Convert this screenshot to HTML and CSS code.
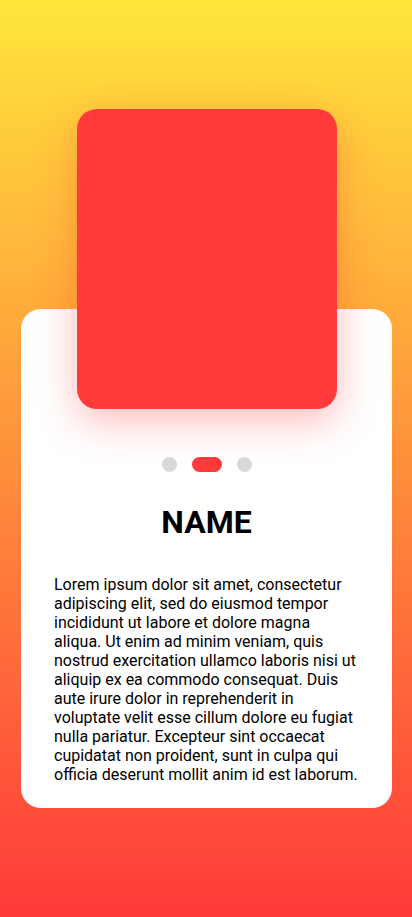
FILE: index.html
```html
<!DOCTYPE html>
<html>
<head>
<meta charset="utf-8">
<link rel="stylesheet" href="styles.css">
</head>
<body>
<div class="screen">
  <div class="photo"></div>
  <div class="card">
    <div class="dots">
      <span class="dot"></span>
      <span class="dot active"></span>
      <span class="dot"></span>
    </div>
    <h1 class="name">NAME</h1>
    <p class="bio">Lorem ipsum dolor sit amet, consectetur adipiscing elit, sed do eiusmod tempor incididunt ut labore et dolore magna aliqua. Ut enim ad minim veniam, quis nostrud exercitation ullamco laboris nisi ut aliquip ex ea commodo consequat. Duis aute irure dolor in reprehenderit in voluptate velit esse cillum dolore eu fugiat nulla pariatur. Excepteur sint occaecat cupidatat non proident, sunt in culpa qui officia deserunt mollit anim id est laborum.</p>
  </div>
</div>
</body>
</html>
```
FILE: styles.css
```css
html, body {
  margin: 0;
  padding: 0;
}
body {
  width: 412px;
  height: 917px;
  overflow: hidden;
  background: linear-gradient(to bottom, #FFE63C 0%, #FF3A3A 100%);
  font-family: Roboto, "Liberation Sans", sans-serif;
}
.screen {
  display: flex;
  flex-direction: column;
  align-items: flex-start;
  padding: 109px 20px 0 21px;
}
.photo {
  position: relative;
  z-index: 1;
  width: 260px;
  height: 300px;
  margin-left: 56px;
  border-radius: 20px;
  background: #FF3B3B;
  box-shadow: 0 12px 40px rgba(255, 60, 60, 0.35);
}
.card {
  box-sizing: border-box;
  width: 371px;
  height: 499px;
  margin-top: -100px;
  padding: 148px 33px 0;
  background: #fff;
  border-radius: 20px;
  display: flex;
  flex-direction: column;
  align-items: center;
}
.dots {
  display: flex;
  gap: 15px;
  height: 15px;
}
.dot {
  width: 15px;
  height: 15px;
  border-radius: 8px;
  background: #D9D9D9;
}
.dot.active {
  width: 30px;
  background: #FF3B3B;
}
.name {
  margin: 32px 0 0;
  font-size: 32px;
  font-weight: 700;
  line-height: 37.5px;
  color: #000;
}
.bio {
  margin: 33px 0 0;
  font-size: 16px;
  line-height: 19px;
  color: #000;
  align-self: stretch;
}
```
